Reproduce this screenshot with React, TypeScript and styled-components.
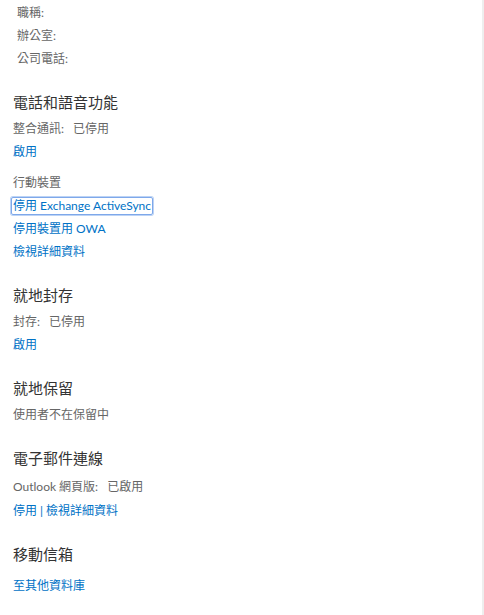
import styled, { createGlobalStyle } from 'styled-components';

const GlobalStyle = createGlobalStyle`
  html, body {
    margin: 0;
    padding: 0;
    background: #fff;
  }
  body {
    font-family: Lato, 'Noto Sans', 'Noto Sans CJK TC', sans-serif;
  }
`;

// ── Page frame ────────────────────────────────────────────────────────────────

const Frame = styled.div`
  width: 484px;
  height: 615px;
  box-sizing: border-box;
  border-right: 2px solid #eeeeee;
  overflow: hidden;
  background: #fff;
`;

const Content = styled.div`
  padding: 1px 13px 0;
`;

// ── Sections ──────────────────────────────────────────────────────────────────

const Section = styled.section`
  margin-top: 22px;

  &:first-child {
    margin-top: 0;
  }
`;

const Heading = styled.h2<{ $after?: number }>`
  margin: 0 0 ${({ $after }) => $after ?? 5}px;
  font-size: 15px;
  line-height: 20px;
  font-weight: 400;
  color: #333;
`;

const Row = styled.div<{ $indent?: number; $gap?: number }>`
  font-size: 12px;
  line-height: 23px;
  height: 23px;
  color: #666;
  white-space: nowrap;
  padding-left: ${({ $indent }) => $indent ?? 0}px;
  margin-top: ${({ $gap }) => $gap ?? 0}px;
`;

const Value = styled.span`
  margin-left: 9px;
`;

const Link = styled.a<{ $focused?: boolean }>`
  color: #0072c6;
  text-decoration: none;
  cursor: pointer;
  ${({ $focused }) =>
    $focused &&
    `
    display: inline-block;
    line-height: 16px;
    margin-left: -2px;
    padding: 0 1px 0 1px;
    border: 1px solid #7ea8ea;
    border-radius: 2px;
    box-shadow: 0 0 0 1px #bcd3f5;
  `}
`;

const Divider = styled.span`
  color: #0072c6;
  margin: 0 3px;
`;

export default function App() {
  return (
    <>
      <GlobalStyle />
      <Frame>
        <Content>
          <Section>
            <Row $indent={4}>職稱:</Row>
            <Row $indent={4}>辦公室:</Row>
            <Row $indent={4}>公司電話:</Row>
          </Section>

          <Section>
            <Heading>電話和語音功能</Heading>
            <Row>
              整合通訊:<Value>已停用</Value>
            </Row>
            <Row>
              <Link>啟用</Link>
            </Row>
            <Row $gap={8}>行動裝置</Row>
            <Row>
              <Link $focused>停用 Exchange ActiveSync</Link>
            </Row>
            <Row>
              <Link>停用裝置用 OWA</Link>
            </Row>
            <Row>
              <Link>檢視詳細資料</Link>
            </Row>
          </Section>

          <Section>
            <Heading>就地封存</Heading>
            <Row>
              封存:<Value>已停用</Value>
            </Row>
            <Row>
              <Link>啟用</Link>
            </Row>
          </Section>

          <Section>
            <Heading $after={5}>就地保留</Heading>
            <Row>使用者不在保留中</Row>
          </Section>

          <Section>
            <Heading $after={7}>電子郵件連線</Heading>
            <Row>
              Outlook 網頁版:<Value>已啟用</Value>
            </Row>
            <Row $gap={1}>
              <Link>停用</Link>
              <Divider>|</Divider>
              <Link>檢視詳細資料</Link>
            </Row>
          </Section>

          <Section>
            <Heading>移動信箱</Heading>
            <Row $gap={10}>
              <Link>至其他資料庫</Link>
            </Row>
          </Section>
        </Content>
      </Frame>
    </>
  );
}
